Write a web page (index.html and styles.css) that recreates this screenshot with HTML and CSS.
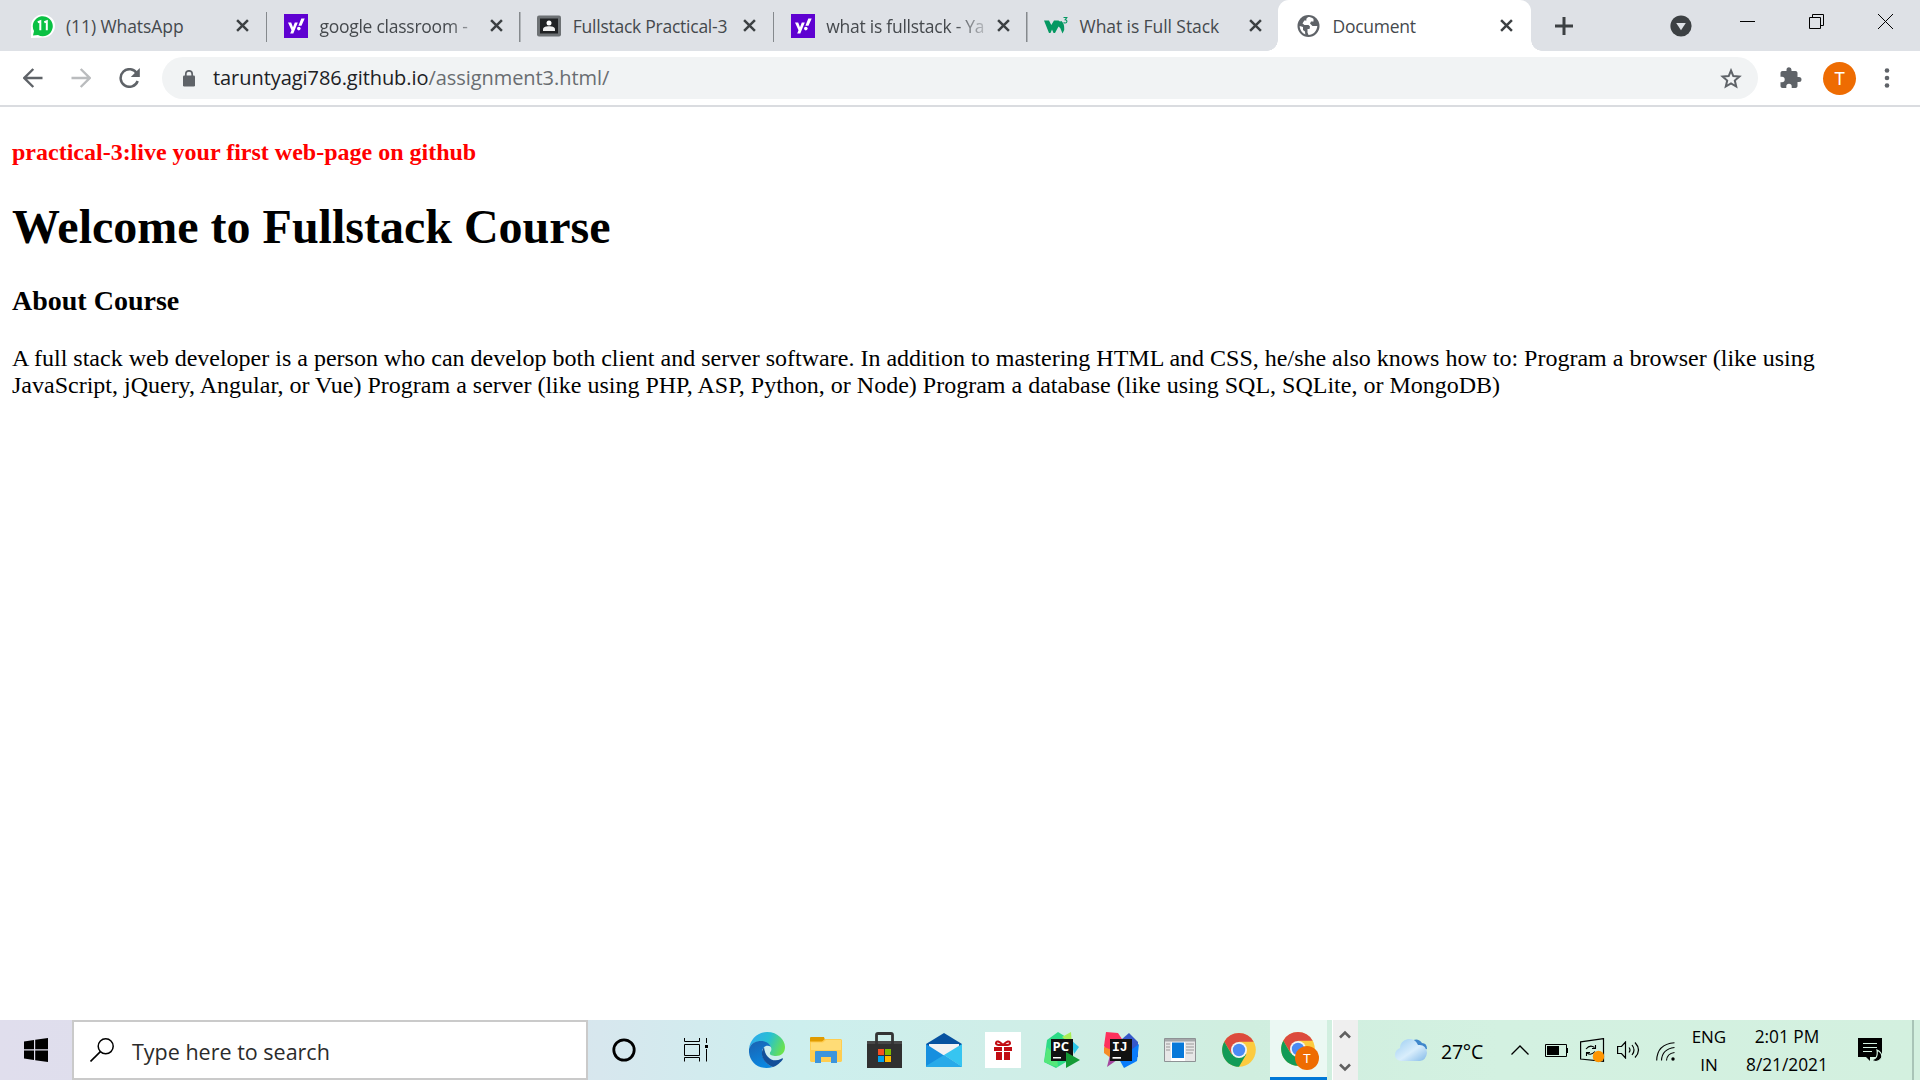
FILE: index.html
```html
<!DOCTYPE html>
<html lang="en">
<head>
<meta charset="utf-8">
<title>Document</title>
<link rel="stylesheet" href="styles.css">
</head>
<body>
<svg class="defs" aria-hidden="true">
  <symbol id="close" viewBox="0 0 12 12"><path d="M1 1L11 11M11 1L1 11" stroke="#3c4043" stroke-width="2.3" fill="none"/></symbol>
  <symbol id="yahoo" viewBox="0 0 24 24"><path fill="#5f01d1" d="M0 0h24v24H0z"/><path fill="#fff" d="M4 8.500h3.200l1.800 4.700 1.800-4.700h3l-4.500 11H6.200l1.300-3.200zM17.300 4.500h3.400l-3.200 7.300h-3.100z"/><circle cx="14.800" cy="14.600" r="1.800" fill="#fff"/></symbol>
  <symbol id="chrome" viewBox="0 0 34 34">
    <circle cx="17" cy="17" r="16.800" fill="#fccb3f"/>
    <path fill="#dc4b3e" d="M2.300 8.700A16.800 16.800 0 0 1 31.600 8.700H17L9.800 21.200z"/>
    <path fill="#129b57" d="M2.300 8.700A16.800 16.800 0 0 0 17 33.800L24.300 21.200H9.600z"/>
    <circle cx="17" cy="17" r="8" fill="#f3f5f3"/><circle cx="17" cy="17" r="6.200" fill="#4b8af4"/>
  </symbol>
</svg>

<header class="tabstrip">
  <div class="tab">
    <svg class="favicon" viewBox="0 0 24 24"><path fill="#fff" d="M0 24V12a12 11.500 0 1 1 12 11.500z"/><path fill="#0ac143" d="M2 21.500L3 17a10 10 0 1 1 4 4z"/><path d="M6 8l2.500-1v9M12.500 8L15 7v9" transform="translate(.8 .2)" fill="none" stroke="#fff" stroke-width="2"/></svg>
    <span class="tab-title wide">(11) WhatsApp</span><svg class="tab-close"><use href="#close"/></svg>
  </div>
  <div class="tab">
    <svg class="favicon"><use href="#yahoo"/></svg>
    <span class="tab-title fade">google classroom -</span><svg class="tab-close"><use href="#close"/></svg>
  </div>
  <div class="tab">
    <svg class="favicon" viewBox="0 0 24 24"><rect y="1.500" width="24" height="21" rx="2" fill="#6d7174"/><path fill="#202224" d="M3 4.500h18v15H3z"/><circle cx="12" cy="9" r="2.500" fill="#fff"/><path fill="#eee" d="M6 17v-1.500C6 13 9 12.300 12 12.300s6 .7 6 3.200V17z"/></svg>
    <span class="tab-title">Fullstack Practical-3</span><svg class="tab-close"><use href="#close"/></svg>
  </div>
  <div class="tab">
    <svg class="favicon"><use href="#yahoo"/></svg>
    <span class="tab-title fade">what is fullstack - Ya</span><svg class="tab-close"><use href="#close"/></svg>
  </div>
  <div class="tab last">
    <svg class="favicon" viewBox="0 0 24 24"><path fill="#059862" d="M0 6.500h5l2.300 4.500L10 6.500h4.500L16 7.500l1.500-.5q2.800 2.500 2.700 7v2l-1.700 3.500-2.300-5.500-1.700-1.500-3.500 6.500H9.500L8 15.500 6.500 19H5z"/><path d="M19.500 3.500h3.300l-1.700 2.300c2.700.2 2.200 3.400-.2 3.200l-1.400-.4" fill="none" stroke="#059862" stroke-width="1.100"/></svg>
    <span class="tab-title wide">What is Full Stack</span><svg class="tab-close"><use href="#close"/></svg>
  </div>
  <div class="tab active">
    <svg class="favicon" viewBox="0 0 24 24"><circle cx="11.500" cy="12" r="11" fill="#5f6368"/><path fill="#fff" d="M11.500 3c-2 1-2.500 2-2 3.500H7.300L5.500 9.500l2 1.500h4l1.500 1.500-.5 2.500h-2v3.500l1 2.500C16 21 20 17 20.300 12h-4.800l-2.500-2.500 1-2h2.500V5C15 3.500 13 3 11.500 3zM2.700 12c0 4 2.600 7.200 5.600 8.400l-.3-3-2-1.500V13z"/></svg>
    <span class="tab-title">Document</span><svg class="tab-close"><use href="#close"/></svg>
  </div>
  <svg class="new-tab" viewBox="0 0 18 18"><path d="M9 0v18M0 9h18" stroke="#3c4043" stroke-width="3"/></svg>
  <div class="window-controls">
    <svg class="tab-search" viewBox="0 0 22 22"><circle cx="11" cy="11" r="10.600" fill="#3c4043"/><path fill="#dee1e6" d="M6.200 8h9.600L11 15.200z"/></svg>
    <svg class="control" viewBox="0 0 15 15"><path d="M0 7.500h15" stroke="#000"/></svg>
    <svg class="control" viewBox="0 0 15 15"><path d="M.5 3.500h11v11H.5zM3.500 3V.5h11v11H12" fill="none" stroke="#000"/></svg>
    <svg class="control" viewBox="0 0 15 15"><path d="M0 0l15 15M15 0L0 15" stroke="#000"/></svg>
  </div>
</header>

<nav class="toolbar">
  <svg class="nav-icon" viewBox="0 0 20 20"><path d="M19.500 10H2M10.300 1L1.300 10l9 9" fill="none" stroke="#5f6368" stroke-width="2.400"/></svg>
  <svg class="nav-icon" viewBox="0 0 20 20"><path d="M.5 10H18M9.700 1l9 9-9 9" fill="none" stroke="#babcbe" stroke-width="2.400"/></svg>
  <svg class="nav-icon reload" viewBox="0 0 21 20"><path d="M18 5.500A8.800 8.800 0 1 0 18.700 13" fill="none" stroke="#5f6368" stroke-width="2.500"/><path fill="#5f6368" d="M20.800 0v9h-9z"/></svg>
  <div class="omnibox">
    <svg class="lock" viewBox="0 0 12 17"><rect y="5.500" width="12" height="11" rx="1.300" fill="#5f6368"/><path d="M2.800 6V4a3.200 3.200 0 0 1 6.400 0v2" fill="none" stroke="#5f6368" stroke-width="1.700"/></svg>
    <span class="url">taruntyagi786.github.io<span class="path">/assignment3.html/</span></span>
    <svg class="star" viewBox="0 0 22 21"><path d="M11 2.500l2.300 5.600 6.100.5-4.600 4 1.400 5.900-5.200-3.200-5.200 3.200 1.400-5.900-4.600-4 6.100-.5z" fill="none" stroke="#5f6368" stroke-width="2"/></svg>
  </div>
  <svg class="puzzle" viewBox="0 0 22 22"><path fill="#5f6368" d="M19 10h-1.500V6c0-1.100-.9-2-2-2H11.500V2.700a2.500 2.500 0 0 0-5 0V4H2.500C1.400 4 .5 4.900.5 6v3.800H2a2.700 2.700 0 0 1 0 5.400H.5V19c0 1.100.9 2 2 2h3.800v-1.500a2.700 2.700 0 0 1 5.400 0V21h3.800c1.100 0 2-.9 2-2v-4H19a2.500 2.500 0 0 0 0-5z"/></svg>
  <span class="avatar">T</span>
  <svg class="menu" viewBox="0 0 6 20"><g fill="#5f6368"><circle cx="3" cy="2.500" r="2.300"/><circle cx="3" cy="10" r="2.300"/><circle cx="3" cy="17.500" r="2.300"/></g></svg>
</nav>

<main class="page">
  <h4 class="practical">practical-3:live your first web-page on github</h4>
  <h1>Welcome to Fullstack Course</h1>
  <h3>About Course</h3>
  <p>A full stack web developer is a person who can develop both client and server software. In addition to mastering HTML and CSS, he/she also knows how to: Program a browser (like using JavaScript, jQuery, Angular, or Vue) Program a server (like using PHP, ASP, Python, or Node) Program a database (like using SQL, SQLite, or MongoDB)</p>
</main>

<footer class="taskbar">
  <div class="start"><svg width="24" height="24" viewBox="0 0 24 24"><path d="M0 3.400L10 2v9.300H0zM11.200 1.800L24 0v11.300H11.200zM0 12.500h10V22L0 20.600zM11.200 12.500H24V24l-12.800-1.800z"/></svg></div>
  <div class="search">
    <svg width="24" height="24" viewBox="0 0 24 24"><circle cx="15.700" cy="8.300" r="7.500" fill="none" stroke="#000" stroke-width="1.500"/><path d="M10.400 13.600L.5 23.500" stroke="#000" stroke-width="1.600"/></svg>
    <span class="search-text">Type here to search</span>
  </div>
  <div class="system-button"><svg width="24" height="24" viewBox="0 0 24 24"><circle cx="12" cy="12" r="10.200" fill="none" stroke="#000" stroke-width="2.800"/></svg></div>
  <div class="system-button"><svg width="24" height="24" viewBox="0 0 24 24"><path d="M.5 0v3.500h15V0M.5 6.500h15v11H.5zM.5 23.500v-4h15v4M22.500 0v5M22.500 11v12.500" fill="none" stroke="#000"/><path d="M21 7h3v3h-3z"/></svg></div>
  <div class="apps">
    <div class="app"><svg width="36" height="36" viewBox="0 0 36 36">
      <defs><linearGradient id="e1" x1="0" y1=".3" x2="1" y2=".6"><stop stop-color="#2fa9ee"/><stop offset=".5" stop-color="#27c0d3"/><stop offset="1" stop-color="#6be34b"/></linearGradient><linearGradient id="e2" x1="0" y1="0" x2=".4" y2="1"><stop stop-color="#1b62b1"/><stop offset="1" stop-color="#0a86df"/></linearGradient></defs>
      <path fill="url(#e1)" d="M0 17C1 7 9 0 18 0c11 0 18 8 18 15 0 6-4 9-9 9-5 0-8-2-5-5 2-5-4-9-10-9C6 9 2 12 0 17z"/>
      <path fill="url(#e2)" d="M0 17c2-6 7-8 12-8 5 0 9 3 10 6-4-3-9 0-9 5 0 7 5 13 11 15C10 39-1 30 0 17z"/>
      <path fill="#134f99" d="M15 15c-6 9 2 18 9 20 4-1 8-5 10-8 0-1-1-1-2 0-8 4-16-1-17-12z"/></svg></div>
    <div class="app"><svg width="32" height="28" viewBox="0 0 32 28"><path fill="#e09b00" d="M0 2q0-1 1-1h13l1 3-2 3H0z"/><path fill="#ffcd50" d="M0 5.500h12L15 3h16l1 1v21l-1 1H1l-1-1z"/><path fill="#ffdc76" d="M1 6.500h12L16 4h15v10H1z"/><path fill="#3b94dc" d="M5 27V16q0-1 1-1h20q1 0 1 1v11h-6v-6H11v6z"/></svg></div>
    <div class="app"><svg width="35" height="36" viewBox="0 0 35 36"><path fill="#303030" d="M0 9h35v27H0z"/><path d="M0 9h35v3H0z" fill="#484848"/><path d="M9.500 12V3q0-1.500 1.500-1.500h13q1.500 0 1.500 1.500v9" fill="none" stroke="#343434" stroke-width="2.800"/><path fill="#f65022" d="M11 17h6v6h-6z"/><path fill="#7fba00" d="M18 17h6v6h-6z"/><path fill="#00a4ef" d="M11 24h6v6h-6z"/><path fill="#ffb900" d="M18 24h6v6h-6z"/></svg></div>
    <div class="app"><svg width="36" height="34" viewBox="0 0 36 34"><path fill="#0752a0" d="M0 11L18 0l18 11v5H0z"/><path fill="#f2f2f4" d="M3 11h30v4L19 24 3 14z"/><path fill="#168fdf" d="M0 11l36 23H0z"/><path fill="#36c5f1" d="M36 11v23L18 22z"/><path fill="#28aae9" d="M0 33L18 22l18 12H0z"/></svg></div>
    <div class="app"><svg width="36" height="36" viewBox="0 0 36 36"><path fill="#fff" d="M0 0h36v36H0z"/><path fill="#c20c12" d="M9 15h8v4H9zM19 15h8v4h-8zM11 20h6v8h-6zM19 20h6v8h-6z"/><path d="M18 13q-6-6-7-2-.5 2.500 7 2 7.500.5 7-2-1-4-7 2" fill="none" stroke="#c20c12" stroke-width="2"/></svg></div>
    <div class="app"><svg width="36" height="36" viewBox="0 0 36 36"><path fill="#2ddb87" d="M3 8L14 0l8 5v25L12 36 0 30z"/><path fill="#54e77a" d="M0 30L3 15l10 10 1 10-4-1z"/><path fill="#a9ee55" d="M18 5l9-5 1 13z"/><path fill="#2bc6e8" d="M27 8l8 7-5 7z"/><path fill="#111" d="M7 7h22v22H7z"/><text x="8.500" y="18.500" class="ide">PC</text><path fill="#fff" d="M9 25h8v1.500H9z"/><path fill="#149b36" d="M22 20l14 8-14 8z"/></svg></div>
    <div class="app"><svg width="36" height="36" viewBox="0 0 36 36"><path fill="#fe315d" d="M3 0l12 1 6 9L9 26 1 14z"/><path fill="#f68b26" d="M1 15l8 3v9l-8-6z"/><path fill="#a4479f" d="M7 23h14L4 35z"/><path fill="#3659c9" d="M19 7l7-6 9 9v15L18 24z"/><path fill="#087cfa" d="M16 27l20-15-2 17-13 7z"/><path fill="#111" d="M7 7h22v22H7z"/><text x="9" y="18.500" class="ide ij">IJ</text><path fill="#fff" d="M9.500 25H18v1.700H9.500z"/></svg></div>
    <div class="app"><svg width="32" height="24" viewBox="0 0 32 24"><path fill="#e7e7e7" stroke="#8e9295" d="M.5.500h31v23H.5z"/><path fill="#a5a8aa" d="M1 1h30v2.500H1z"/><path fill="#fff" d="M7 4h14v19H7z"/><path fill="#0779d9" d="M8 4.500h12V20H8z"/><path d="M2 6h4M2 9h4M2 12h4M22 6h8M22 9h8M22 12h8M22 15h7" stroke="#999"/></svg></div>
    <div class="app"><svg width="34" height="34"><use href="#chrome"/></svg></div>
    <div class="app running"><svg width="38" height="38" viewBox="0 0 38 38"><use href="#chrome" width="34" height="34"/><circle cx="26" cy="26" r="12" fill="#ee6c02"/><text x="26" y="30.500" text-anchor="middle" class="badge">T</text></svg></div>
  </div>
  <div class="scroller">
    <svg width="12" height="9" viewBox="0 0 12 9"><path d="M1 7.500l5-5 5 5" fill="none" stroke="#606060" stroke-width="2.600"/></svg>
    <svg width="12" height="9" viewBox="0 0 12 9"><path d="M1 1.500l5 5 5-5" fill="none" stroke="#606060" stroke-width="2.600"/></svg>
  </div>
  <div class="weather">
    <svg width="32" height="22" viewBox="0 0 32 22"><defs><linearGradient id="cl" x1="0" y1="0" x2="1" y2="1"><stop stop-color="#9bcdf2"/><stop offset=".55" stop-color="#d9eefc"/><stop offset="1" stop-color="#82b9e8"/></linearGradient></defs><path fill="#3f87cb" d="M16 2q7-4 11 2 5 0 5 6l-6 2z"/><path fill="url(#cl)" d="M6 22q-6-1-6-6 0-5 5-7 0-7 8-9 7-1 10 6 8-1 9 8-1 7-7 8z"/></svg>
    <span class="temperature">27°C</span>
  </div>
  <div class="tray">
    <svg class="chevron" width="18" height="10" viewBox="0 0 18 10"><path d="M.5 9.500L9 1l8.500 8.500" fill="none" stroke="#000" stroke-width="1.300"/></svg>
    <svg class="battery" width="23" height="13" viewBox="0 0 23 13"><path d="M.5.500h21v12H.5z" fill="none" stroke="#000"/><path d="M2 2h12v9H2zM22 4h1v5h-1z"/></svg>
    <svg class="update" width="25" height="25" viewBox="0 0 25 25"><path d="M.6 3.800L23.500.6v22.800L.6 21z" fill="none" stroke="#000" stroke-width="1.200"/><path d="M6 11q4-5 8.500-1.500M15.500 7v3.500h-3.500M15 13.500q-4 4.500-8 1.500M6.500 18v-3.500h3.500" fill="none" stroke="#000" stroke-width="1.100"/><circle cx="18.500" cy="18.500" r="5.700" fill="#ff9500"/></svg>
    <svg class="speaker" width="23" height="18" viewBox="0 0 23 18"><path d="M.6 5.500h3.900l4-4.500v16l-4-4.500H.6zM12 6.500q2 2.500 0 5M15 4q4 5 0 10M18 1.500q7 7.500 0 15" fill="none" stroke="#000" stroke-width="1.200"/></svg>
    <svg class="wifi" width="19" height="19" viewBox="0 0 19 19"><path d="M.7 18.500Q1 2 18.500.7M5.500 18.500Q6 7 18.500 5.500M10.500 18.500Q11 11.500 18.500 10.500" fill="none" stroke="#000" stroke-width="1.100"/><circle cx="17" cy="17" r="1.700"/></svg>
  </div>
  <div class="language"><span>ENG</span><span>IN</span></div>
  <div class="clock"><span>2:01 PM</span><span class="date">8/21/2021</span></div>
  <svg class="notifications" width="25" height="25" viewBox="0 0 25 25"><path d="M0 0h24v19H12v4l-4-4H0z"/><path d="M5 5.500h14M5 9.500h14M5 13.500h9" stroke="#d3f1e1" stroke-width="1.200"/><path fill="#000" stroke="#d3f1e1" stroke-width="1.200" d="M19 12q6 3 4.500 8-4 6-10 2 7-1 5.500-10z"/></svg>
  <div class="show-desktop"></div>
</footer>
</body>
</html>
```

FILE: styles.css
```css
* { box-sizing: border-box; }
body {
  margin: 0;
  height: 1080px;
  display: flex;
  flex-direction: column;
  overflow: hidden;
  background: #fff;
  font-family: "Open Sans", "Noto Sans", sans-serif;
}
svg { display: block; flex: none; }
.defs { display: none; }

/* Tab strip */
.tabstrip {
  height: 51px;
  flex: none;
  display: flex;
  align-items: center;
  padding-left: 14px;
  background: #dee1e6;
}
.tab {
  width: 253.4px;
  height: 51px;
  flex: none;
  display: flex;
  align-items: center;
  padding: 0 18px 0 16.500px;
  background: linear-gradient(#85898d, #85898d) right 0 top 12px / 1.500px 30px no-repeat;
}
.tab.last { width: 250.400px; padding-right: 16px; background: none; }
.tab.active {
  width: 253px;
  padding-left: 19px;
  background: #fff;
  border-radius: 11px 11px 0 0;
  position: relative;
}
.tab.active::before,
.tab.active::after {
  content: "";
  position: absolute;
  bottom: 0;
  width: 11px;
  height: 11px;
}
.tab.active::before { left: -11px; background: radial-gradient(circle at 0 0, #dee1e6 10.500px, #fff 11px); }
.tab.active::after { right: -11px; background: radial-gradient(circle at 100% 0, #dee1e6 10.500px, #fff 11px); }
.favicon { width: 24px; height: 24px; margin-top: 1px; }
.tab-title {
  flex: 1;
  min-width: 0;
  margin: 0 6px 0 11.500px;
  white-space: nowrap;
  font-size: 17.500px;
  line-height: 26px;
  letter-spacing: -0.250px;
  color: #45494d;
}
.tab-title.wide { letter-spacing: -0.080px; }
.tab-title.fade { mask-image: linear-gradient(90deg, #000 78%, transparent 102%); }
.tab-close { width: 13px; height: 13px; }
.new-tab { width: 18px; height: 18px; margin-left: 24px; }
.window-controls {
  display: flex;
  align-items: center;
  margin: -8px 27px 0 auto;
  gap: 54px;
}
.tab-search { width: 22px; height: 22px; margin: 8px -6px 0 0; }
.control { width: 15px; height: 15px; }

/* Toolbar */
.toolbar {
  height: 56px;
  flex: none;
  display: flex;
  align-items: center;
  padding: 0 30px 0 23px;
  border-bottom: 2px solid #dadce0;
}
.nav-icon { width: 20px; height: 20px; margin-right: 28px; }
.nav-icon.reload { width: 21px; margin-right: 22px; }
.omnibox {
  flex: 1;
  height: 42px;
  display: flex;
  align-items: center;
  padding: 0 16px 0 21px;
  border-radius: 21px;
  background: #f1f3f4;
}
.lock { width: 12px; height: 17px; }
.url {
  margin-left: 18px;
  font-size: 20px;
  line-height: 28px;
  letter-spacing: -0.060px;
  color: #202124;
}
.url .path { color: #696d71; }
.star { width: 22px; height: 21px; margin-left: auto; }
.puzzle { width: 22px; height: 22px; margin-left: 22px; }
.avatar {
  width: 33px;
  height: 33px;
  margin: 0 28px 0 21px;
  border-radius: 50%;
  background: #ee6c02;
  color: #fff;
  font: 18px/33px Roboto, sans-serif;
  text-align: center;
}
.menu { width: 6px; height: 20px; }

/* Document, shown at 150% */
.page {
  flex: 1;
  padding: 0 12px;
  color: #000;
  font: 24px/27px "Liberation Serif", serif;
}
.practical { margin: 32px 0; font-size: 24px; color: #f00; }
h1 { margin: 33px 0 31px; font-size: 48px; line-height: 55px; }
h3 { margin: 28px 0; font-size: 28px; line-height: 32px; }
p { margin: 0; }

/* Taskbar */
.taskbar {
  height: 60px;
  flex: none;
  display: flex;
  align-items: center;
  background: linear-gradient(90deg, #e0deed 0, #dcdfed 300px, #d7e7ee 600px, #cdefee 800px, #cfeee8 1000px, #d0eedf 1250px, #d3f1e1 1500px, #d3f0df 1920px);
}
.start { width: 72px; display: grid; place-items: center; }
.search {
  width: 516px;
  height: 60px;
  display: flex;
  align-items: center;
  padding-left: 16px;
  border: 2px solid #cacaca;
  background: #fff;
}
.search-text {
  margin: 3px 0 0 18px;
  font-size: 21.500px;
  line-height: 30px;
  color: #2b2b2b;
  white-space: nowrap;
}
.system-button { width: 72px; display: grid; place-items: center; }
.apps { display: grid; grid-template-columns: repeat(10, 59.100px); margin-left: 5px; }
.app { height: 60px; display: grid; place-items: center; }
.app.running {
  margin: 0 1px;
  padding-left: 3px;
  padding-top: 4px;
  border-bottom: 3px solid #0078d7;
  background: #ebf8f3;
}
.ide { font: bold 13px "Open Sans", sans-serif; fill: #fff; }
.ij { font: bold 13px "Liberation Mono", monospace; }
.badge { font: 13px Roboto, sans-serif; fill: #fff; }
.scroller {
  width: 26px;
  height: 60px;
  margin-left: 4px;
  display: flex;
  flex-direction: column;
  align-items: center;
  justify-content: space-between;
  padding: 10px 0 8px;
  border-left: 1px solid #fff;
  background: #efefef;
}
.weather { display: flex; align-items: center; margin-left: 37px; }
.temperature { margin: 3px 0 0 14px; width: 45px; font-size: 19.500px; line-height: 28px; letter-spacing: -0.200px; }
.tray { display: flex; align-items: center; margin-left: 25px; }
.battery { margin-left: 16px; }
.update { margin-left: 12px; }
.speaker { margin-left: 12px; }
.wifi { margin-left: 16px; margin-top: 2px; }
.language,
.clock {
  display: flex;
  flex-direction: column;
  align-items: center;
  margin-top: 1px;
  font-size: 17px;
  line-height: 28px;
  white-space: nowrap;
}
.language { width: 36px; margin-left: 16px; }
.clock { width: 88px; margin-left: 16px; font-size: 17.300px; }
.notifications { margin-left: 27px; }
.show-desktop { width: 8px; height: 60px; margin-left: auto; border-left: 2px solid #a9c4b7; }
```
